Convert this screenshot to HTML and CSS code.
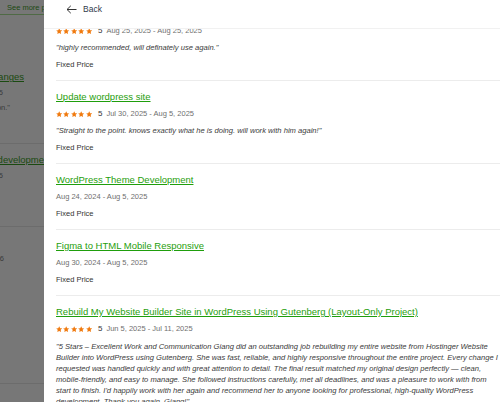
FILE: index.html
```html
<!DOCTYPE html>
<html>
<head>
<meta charset="utf-8">
<link rel="stylesheet" href="styles.css">
</head>
<body>
<div class="page">
  <div class="backdrop">
    <div class="bg-btn"><span class="bg-btn-text">See more projects</span></div>
    <div class="bg-gap"></div>
    <div class="bg-line pr20"><span class="bg-link">Website changes</span></div>
    <div class="bg-line pr41"><span class="bg-meta">Aug 5, 2025 - Aug 5, 2025</span></div>
    <div class="bg-line pr34"><span class="bg-meta">"Great communication."</span></div>
    <div class="bg-sep s1"></div>
    <div class="bg-line"><span class="bg-link cut">Wordpress theme development</span></div>
    <div class="bg-line pr41"><span class="bg-meta">Aug 5, 2025 - Aug 5, 2025</span></div>
    <div class="bg-sep s2"></div>
    <div class="bg-line pr40"><span class="bg-meta">Jul 2026</span></div>
    <div class="bg-sep s3"></div>
  </div>

  <div class="panel">
    <div class="panel-head">
      <svg class="back-icon" width="11" height="9" viewBox="0 0 11 9"><path d="M10.5 4.5H1M4.8 0.8L1 4.5l3.8 3.7" fill="none" stroke="#333" stroke-width="1"/></svg>
      <span class="back-text">Back</span>
    </div>
    <div class="scroller">
      <div class="list">
        <div class="item">
          <a class="title">Website changes</a>
          <div class="row meta"><span class="stars"></span><span class="score">5</span><span class="date">Aug 25, 2025 - Aug 25, 2025</span></div>
          <div class="row quote">"highly recommended, will definately use again."</div>
          <div class="row price">Fixed Price</div>
        </div>
        <div class="item">
          <a class="title">Update wordpress site</a>
          <div class="row meta"><span class="stars"></span><span class="score">5</span><span class="date">Jul 30, 2025 - Aug 5, 2025</span></div>
          <div class="row quote">"Straight to the point. knows exactly what he is doing. will work with him again!"</div>
          <div class="row price">Fixed Price</div>
        </div>
        <div class="item">
          <a class="title">WordPress Theme Development</a>
          <div class="row date">Aug 24, 2024 - Aug 5, 2025</div>
          <div class="row price">Fixed Price</div>
        </div>
        <div class="item">
          <a class="title">Figma to HTML Mobile Responsive</a>
          <div class="row date">Aug 30, 2024 - Aug 5, 2025</div>
          <div class="row price">Fixed Price</div>
        </div>
        <div class="item">
          <a class="title">Rebuild My Website Builder Site in WordPress Using Gutenberg (Layout-Only Project)</a>
          <div class="row meta"><span class="stars"></span><span class="score">5</span><span class="date">Jun 5, 2025 - Jul 11, 2025</span></div>
          <div class="row quote para">"5 Stars – Excellent Work and Communication Giang did an outstanding job rebuilding my entire website from Hostinger Website Builder into WordPress using Gutenberg. She was fast, reliable, and highly responsive throughout the entire project. Every change I requested was handled quickly and with great attention to detail. The final result matched my original design perfectly — clean, mobile-friendly, and easy to manage. She followed instructions carefully, met all deadlines, and was a pleasure to work with from start to finish. I'd happily work with her again and recommend her to anyone looking for professional, high-quality WordPress development. Thank you again, Giang!"</div>
          <div class="row price">Fixed Price</div>
        </div>
      </div>
    </div>
  </div>
</div>
<script>
document.querySelectorAll('.stars').forEach(function(s){
  var svg='';
  for(var i=0;i<5;i++){
    svg+='<svg width="6.4" height="6.4" viewBox="0 0 10 10"><path d="M5 0.3l1.45 3.05 3.3.4-2.45 2.3.62 3.3L5 7.75 2.08 9.35l.62-3.3L.25 3.75l3.3-.4z" fill="#f07a0f"/></svg>';
  }
  s.innerHTML=svg;
});
</script>
</body>
</html>
```
FILE: styles.css
```css
html, body {
  margin: 0;
  padding: 0;
}
body {
  font-family: "Liberation Sans", Arial, sans-serif;
  background: #ffffff;
}
.page {
  display: flex;
  width: 500px;
  height: 402px;
  overflow: hidden;
}

/* dimmed background page */
.backdrop {
  width: 44px;
  flex: none;
  background: #777777;
  overflow: hidden;
  display: flex;
  flex-direction: column;
}
.backdrop > * { flex: none; }
.bg-btn {
  height: 14px;
  border-bottom: 1px solid #4f6a45;
  display: flex;
  align-items: center;
  padding-left: 7px;
  white-space: nowrap;
}
.bg-btn-text {
  font-size: 7.5px;
  color: #1c4a12;
}
.bg-gap { height: 54px; }
.bg-line {
  display: flex;
  justify-content: flex-end;
  white-space: nowrap;
  height: 15.5px;
  align-items: center;
}
.pr20 { padding-right: 20px; }
.pr34 { padding-right: 34px; }
.pr40 { padding-right: 40px; }
.pr41 { padding-right: 41px; }
.cut { margin-right: -8px; }
.bg-link {
  font-size: 9.5px;
  color: #1a4a10;
  text-decoration: underline;
}
.bg-meta {
  font-size: 7.5px;
  color: #3a3a3a;
}
.bg-sep {
  border-bottom: 1px solid #6c6c6c;
}
.s1 { margin-top: 27.5px; margin-bottom: 8px; }
.s2 { margin-top: 43px; margin-bottom: 24px; }
.s3 { margin-top: 116px; }

/* panel */
.panel {
  flex: 1;
  display: flex;
  flex-direction: column;
  background: #ffffff;
  min-width: 0;
}
.panel-head {
  height: 29px;
  flex: none;
  display: flex;
  align-items: flex-start;
  gap: 6px;
  padding: 4px 0 0 22px;
  box-sizing: border-box;
  border-bottom: 1px solid #f1f1f1;
  background: #ffffff;
}
.back-icon {
  display: block;
  margin-top: 1px;
}
.back-text {
  font-size: 8.5px;
  line-height: 11px;
  color: #2f3a4a;
}
.scroller {
  flex: 1;
  overflow: hidden;
}
.list {
  margin-top: -31px;
  padding-left: 12px;
}
.item {
  padding: 10px 0 9px;
  border-bottom: 1px solid #ececec;
}
.title {
  display: block;
  font-size: 9.5px;
  line-height: 12px;
  color: #1f9e0c;
  text-decoration: underline;
  white-space: nowrap;
}
.row {
  margin-top: 5px;
  line-height: 12px;
  font-size: 7.5px;
}
.meta {
  display: flex;
  align-items: center;
}
.stars {
  display: flex;
  gap: 1px;
}
.stars svg { display: block; }
.score {
  font-size: 8px;
  color: #333333;
  margin-left: 6px;
  margin-right: 4px;
}
.date {
  font-size: 7.5px;
  color: #6f6f6f;
}
.quote {
  font-size: 7.6px;
  font-style: italic;
  color: #3b3b3b;
}
.para {
  line-height: 11px;
  margin-top: 5.5px;
}
.price {
  color: #333333;
}
```
